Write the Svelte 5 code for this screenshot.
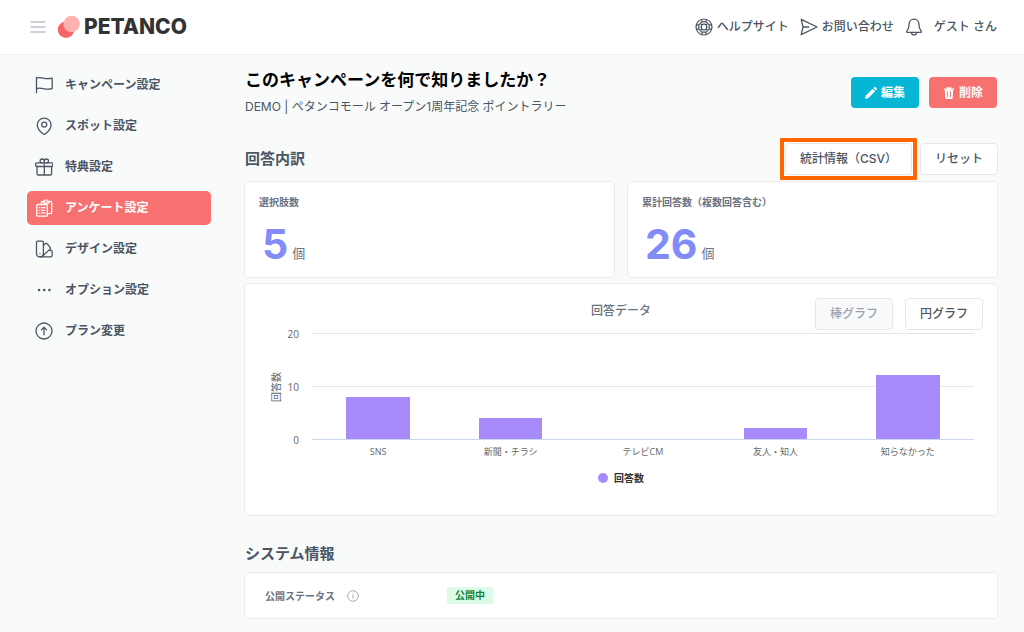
<script>
  const nav = [
    { label: 'キャンペーン設定', icon: 'flag' },
    { label: 'スポット設定', icon: 'pin' },
    { label: '特典設定', icon: 'gift' },
    { label: 'アンケート設定', icon: 'survey', active: true },
    { label: 'デザイン設定', icon: 'palette' },
    { label: 'オプション設定', icon: 'dots' },
    { label: 'プラン変更', icon: 'up' }
  ];

  const stats = [
    { label: '選択肢数', value: 5 },
    { label: '累計回答数（複数回答含む）', value: 26 }
  ];

  const max = 20;
  const ticks = [20, 10, 0];
  const answers = [
    { label: 'SNS', value: 8 },
    { label: '新聞・チラシ', value: 4 },
    { label: 'テレビCM', value: 0 },
    { label: '友人・知人', value: 2 },
    { label: '知らなかった', value: 12 }
  ];

  let chartType = $state('bar');
</script>

<header class="topbar">
  <button class="menu" type="button" aria-label="メニュー">
    <svg width="16" height="12" viewBox="0 0 16 12" fill="none" stroke="#9aa3b2" stroke-width="1.1">
      <path d="M.5 1h15M.5 6h15M.5 11h15" />
    </svg>
  </button>
  <a class="logo" href="#top">
    <svg width="24" height="24" viewBox="0 0 24 24" aria-hidden="true">
      <circle cx="9" cy="14.7" r="8.2" fill="#f56565" />
      <circle cx="14.6" cy="9" r="8.2" fill="#ffb0b0" />
    </svg>
    <span>PETANCO</span>
  </a>
  <nav class="links">
    <a href="#help">
      <svg width="18" height="18" viewBox="0 0 18 18" fill="none" stroke="currentColor" stroke-width="1.2">
        <circle cx="9" cy="9" r="8" />
        <circle cx="9" cy="9" r="2.9" />
        <path d="M6.900 1.300v2.500l4.200 0V1.300M6.900 16.700v-2.500h4.200v2.500M1.300 6.900h2.500v4.200H1.300M16.700 6.900h-2.500v4.200h2.500M3.800 6.900l3.100-3.100M11.100 3.800l3.100 3.100M14.200 11.100l-3.100 3.100M6.900 14.200l-3.100-3.100M5.300 5.300l1.700 1.700M12.700 5.300l-1.700 1.700M5.300 12.700l1.700-1.700M12.700 12.700l-1.700-1.700" />
      </svg>
      ヘルプサイト
    </a>
    <a href="#contact">
      <svg width="18" height="18" viewBox="0 0 18 18" fill="none" stroke="currentColor" stroke-width="1.3" stroke-linejoin="round">
        <path d="M1.2 1.400 17 9 1.200 16.600 3 9zM3 9h6.200" />
      </svg>
      お問い合わせ
    </a>
    <button class="bell" type="button" aria-label="お知らせ">
      <svg width="18" height="18" viewBox="0 0 18 18" fill="none" stroke="currentColor" stroke-width="1.3" stroke-linejoin="round">
        <path d="M9 1.200c-3 0-4.900 2.200-4.900 4.900 0 4.500-1 5.800-2.300 7.200-.3.400-.1 1 .5 1h13.400c.6 0 .8-.6.5-1-1.300-1.400-2.300-2.700-2.300-7.200C13.900 3.400 12 1.200 9 1.200z" />
        <path d="M6.500 14.400c0 1.500 1.100 2.500 2.500 2.500s2.500-1 2.500-2.500" />
      </svg>
    </button>
    <span class="user">ゲスト さん</span>
  </nav>
</header>

<div class="layout">
  <aside>
    <nav class="side">
      {#each nav as item}
        <a href="#{item.icon}" class:active={item.active} aria-current={item.active ? 'page' : undefined}>
          <svg width="18" height="18" viewBox="0 0 18 18" fill="none" stroke="currentColor" stroke-width="1.3" stroke-linecap="round" stroke-linejoin="round" aria-hidden="true">
            {#if item.icon === 'flag'}
              <path d="M1.500 1.300v15.400M1.500 2.200c5.200-2 8.200 2 15.700 0v10.400c-7.500 2-10.500-2-15.700 0" />
            {:else if item.icon === 'pin'}
              <path d="M9.200 1.200c-3.900 0-6.900 2.900-6.900 6.700 0 3.600 3.500 7.200 5.700 8.900.7.600 1.700.600 2.400 0 2.200-1.700 5.700-5.300 5.700-8.900 0-3.800-3-6.700-6.900-6.700z" />
              <circle cx="9.200" cy="7.600" r="2.500" />
            {:else if item.icon === 'gift'}
              <rect x=".7" y="4.800" width="17" height="3.700" rx=".9" />
              <path d="M2 8.500v7.200c0 .8.500 1.300 1.300 1.300h12c.8 0 1.300-.5 1.300-1.300V8.500M9.300 4.800V17M9.300 4.800V3.200C9.300 2 8.400 1 7.200 1S5.100 1.800 5.100 2.900s.9 1.900 2.100 1.900M9.300 3.200c0-1.200.9-2.200 2.100-2.200s2.100.8 2.100 1.900-.9 1.900-2.100 1.900" />
            {:else if item.icon === 'survey'}
              <rect x="1.800" y="5.500" width="10.500" height="11.700" rx=".9" />
              <path d="M6.300 5.500V3.300c0-.6.300-.9.900-.9h1M14 2.400h1.400c.8 0 1.300.5 1.300 1.300v9.700c0 .8-.5 1.300-1.300 1.300h-3.100" />
              <path d="M8.500 4V2.300h1.100c.2-1 .8-1.500 1.600-1.500s1.400.5 1.600 1.500h1.100V4z" />
              <path d="M6.300 8.700h3.600M6.300 11.300h3.600M6.300 13.900h3.600M4.200 8.700h.1M4.200 11.300h.1M4.200 13.900h.1" />
            {:else if item.icon === 'palette'}
              <path d="M2.500 1.100h4.800c.7 0 1.100.4 1.100 1.100v11.300c0 2-1.300 3.400-3.500 3.400s-3.400-1.400-3.400-3.400V2.200c0-.7.400-1.100 1-1.100z" />
              <path d="M8.400 5.100l2.400-1.600c.6-.4 1.100-.3 1.500.3l2.900 3.800c.4.600.3 1.100-.2 1.500l-7.500 7.100M13.700 10.300h2.300c.7 0 1.100.4 1.100 1.100v4.400c0 .7-.4 1.100-1.100 1.100H5M4.900 13.600h.1" />
            {:else if item.icon === 'dots'}
              <g fill="currentColor" stroke="none">
                <circle cx="4" cy="9" r="1.300" />
                <circle cx="9.200" cy="9" r="1.300" />
                <circle cx="14.400" cy="9" r="1.300" />
              </g>
            {:else}
              <circle cx="9" cy="9" r="8" />
              <path d="M9 12.700V5.500M6.400 7.900 9 5.300l2.600 2.600" />
            {/if}
          </svg>
          {item.label}
        </a>
      {/each}
    </nav>
  </aside>

  <main>
    <div class="heading">
      <div>
        <h1>このキャンペーンを何で知りましたか？</h1>
        <p>DEMO | ペタンコモール オープン1周年記念 ポイントラリー</p>
      </div>
      <div class="actions">
        <button class="solid edit" type="button">
          <svg width="12" height="12" viewBox="0 0 12 12" fill="currentColor" aria-hidden="true">
            <path d="M0 12l.9-3.400L7.700 1.800l2.500 2.500-6.800 6.800zM8.500 1l.7-.7c.4-.4.900-.4 1.300 0l1.200 1.200c.4.400.4.900 0 1.300l-.7.700z" />
          </svg>
          編集
        </button>
        <button class="solid delete" type="button">
          <svg width="12" height="12" viewBox="0 0 12 12" aria-hidden="true">
            <path d="M1 2.200h10M4.200 2V.8h3.600V2" fill="none" stroke="currentColor" stroke-width="1.300" />
            <path d="M1.800 3h8.400l-.5 8c-.1.700-.4 1-1.100 1H3.400c-.7 0-1-.3-1.100-1z" fill="currentColor" />
            <path d="M4.400 4.300l.2 6M7.600 4.300l-.2 6" stroke="#f87171" stroke-width=".9" />
          </svg>
          削除
        </button>
      </div>
    </div>

    <section>
      <div class="toolbar">
        <h2>回答内訳</h2>
        <div class="actions">
          <button class="outline marked" type="button">統計情報（CSV）</button>
          <button class="outline" type="button">リセット</button>
        </div>
      </div>

      <div class="stats">
        {#each stats as stat}
          <div class="card stat">
            <h3>{stat.label}</h3>
            <p><strong>{stat.value}</strong><span>個</span></p>
          </div>
        {/each}
      </div>

      <div class="card chart-card">
        <div class="chart-head">
          <h3>回答データ</h3>
          <div class="switch">
            <button class="outline" type="button" disabled={chartType === 'bar'} onclick={() => (chartType = 'bar')}>棒グラフ</button>
            <button class="outline" type="button" disabled={chartType === 'pie'} onclick={() => (chartType = 'pie')}>円グラフ</button>
          </div>
        </div>
        <div class="chart">
          <div class="axis-title"><span>回答数</span></div>
          <div class="ticks">
            {#each ticks as tick}<span>{tick}</span>{/each}
          </div>
          <div class="plot">
            <div class="grid"><i></i><i></i></div>
            <div class="bars">
              {#each answers as answer}
                <div><b style="height: {(answer.value / max) * 100}%"></b></div>
              {/each}
            </div>
          </div>
          <div class="categories">
            {#each answers as answer}<span>{answer.label}</span>{/each}
          </div>
        </div>
        <div class="legend"><i></i>回答数</div>
      </div>
    </section>

    <section class="system">
      <h2>システム情報</h2>
      <div class="card row">
        <div class="row-label">
          公開ステータス
          <svg width="12" height="12" viewBox="0 0 12 12" fill="none" stroke="#9ca3af" aria-hidden="true">
            <circle cx="6" cy="6" r="5.300" stroke-width=".9" />
            <path d="M6 5.300v3.200M6 3.400v1" />
          </svg>
        </div>
        <span class="badge">公開中</span>
      </div>
    </section>
  </main>
</div>

<style>
  :global(body) {
    margin: 0;
    background: #f9fbfb;
    color: #4b5563;
    font: 12px/20px Inter, 'Noto Sans CJK JP', sans-serif;
  }
  * {
    box-sizing: border-box;
  }
  h1, h2, h3, p {
    margin: 0;
  }
  svg {
    flex: none;
    display: block;
  }
  button {
    font: inherit;
    color: inherit;
    cursor: pointer;
  }
  a {
    color: inherit;
    text-decoration: none;
  }

  .topbar {
    display: flex;
    align-items: center;
    height: 55px;
    padding: 0 27px 0 30px;
    background: #fff;
    border-bottom: 1px solid #f1f4f5;
  }
  .menu, .bell {
    padding: 0;
    border: 0;
    background: none;
  }
  .logo {
    display: flex;
    align-items: center;
    gap: 3px;
    margin-left: 11px;
    color: #333;
    font-size: 21px;
    font-weight: 800;
  }
  .links {
    display: flex;
    align-items: center;
    gap: 11px;
    margin-left: auto;
    font-weight: 500;
  }
  .links a {
    display: flex;
    align-items: center;
    gap: 4px;
  }

  .layout {
    display: grid;
    grid-template-columns: 184px minmax(0, 1fr);
    gap: 33px;
    padding: 13px 26px 13px 27px;
  }
  .side {
    display: flex;
    flex-direction: column;
    gap: 7px;
  }
  .side a {
    display: flex;
    align-items: center;
    gap: 12px;
    height: 34px;
    padding: 0 8px;
    border-radius: 5px;
    font-weight: 600;
  }
  .side .active {
    background: #f87171;
    color: #fff;
  }

  .heading, .toolbar {
    display: flex;
    align-items: center;
    justify-content: space-between;
  }
  .heading {
    padding: 0 1px;
  }
  h1 {
    color: #000;
    font-size: 17px;
    line-height: 24px;
    font-weight: 700;
  }
  .heading p {
    margin-top: 5px;
  }
  h2 {
    padding-left: 1px;
    font-size: 15px;
    line-height: 24px;
    font-weight: 600;
  }
  .actions {
    display: flex;
    gap: 10px;
  }
  .solid {
    display: flex;
    align-items: center;
    gap: 4px;
    height: 31px;
    padding: 0 14px;
    border: 0;
    border-radius: 4px;
    color: #fff;
    font-weight: 600;
  }
  .edit {
    background: #06b6d4;
  }
  .delete {
    background: #f87171;
  }
  .toolbar {
    margin-top: 26px;
  }
  .toolbar .actions {
    gap: 8px;
  }
  .outline {
    height: 32px;
    padding: 0 14px;
    border: 1px solid #e5e7eb;
    border-radius: 4px;
    background: #fff;
    font-weight: 500;
  }
  .outline:disabled {
    background: #f9fafb;
    color: #9ca3af;
    cursor: default;
  }
  .marked {
    position: relative;
  }
  .marked::after {
    content: '';
    position: absolute;
    inset: -6px;
    border: 4px solid #ff6600;
    border-radius: 1px;
  }

  .card {
    border: 1px solid #e8ecec;
    border-radius: 5px;
    background: #fff;
  }
  .stats {
    display: grid;
    grid-template-columns: 1fr 1fr;
    gap: 12px;
    margin-top: 6px;
  }
  .stat {
    padding: 10px 14px;
    color: #6b7280;
  }
  .stat h3 {
    font-size: 10px;
    line-height: 20px;
    font-weight: 600;
  }
  .stat p {
    display: flex;
    align-items: flex-end;
    gap: 4px;
    margin-top: 9px;
    padding-left: 3px;
    font-size: 13px;
    line-height: 28px;
  }
  .stat strong {
    color: #818cf8;
    font-size: 41px;
    line-height: 46px;
    font-weight: 700;
  }

  .chart-card {
    margin-top: 5px;
    padding: 14px 14px 31px;
  }
  .chart-head {
    display: grid;
    grid-template-columns: 1fr auto 1fr;
  }
  .chart-head h3 {
    grid-column: 2;
    color: #6b7280;
    font-size: 12px;
    line-height: 26px;
    font-weight: 500;
  }
  .switch {
    display: flex;
    justify-content: flex-end;
    gap: 12px;
  }
  .chart {
    display: grid;
    grid-template-columns: 12px 17px minmax(0, 1fr);
    grid-template-rows: 107px auto;
    margin-top: 3px;
    padding: 0 9px 0 11px;
    color: #666;
    font-family: 'Open Sans', 'Noto Sans CJK JP', sans-serif;
    font-size: 10px;
    line-height: 12px;
  }
  .axis-title {
    display: grid;
    place-items: center;
  }
  .axis-title span {
    writing-mode: vertical-rl;
    text-orientation: sideways;
    transform: rotate(180deg);
  }
  .ticks {
    display: flex;
    flex-direction: column;
    justify-content: space-between;
    margin: -5px 0 -6px;
    text-align: right;
  }
  .plot {
    display: grid;
    margin-left: 13px;
  }
  .grid, .bars {
    grid-area: 1 / 1;
  }
  .grid {
    display: grid;
    grid-template-rows: 1fr 1fr;
    border-bottom: 1px solid #ccd6eb;
  }
  .grid i {
    border-top: 1px solid #e6e6e6;
  }
  .bars {
    display: grid;
    grid-template-columns: repeat(5, 1fr);
    padding-bottom: 1px;
  }
  .bars div {
    display: flex;
    align-items: flex-end;
    justify-content: center;
  }
  .bars b {
    width: 48%;
    background: #a78bfa;
  }
  .categories {
    grid-column: 3;
    display: grid;
    grid-template-columns: repeat(5, 1fr);
    margin: 6px 0 0 13px;
    font-size: 9px;
    text-align: center;
  }
  .legend {
    display: flex;
    align-items: center;
    justify-content: center;
    gap: 6px;
    margin-top: 14px;
    color: #333;
    font-size: 10px;
    line-height: 12px;
    font-weight: 700;
  }
  .legend i {
    width: 10px;
    height: 10px;
    border-radius: 50%;
    background: #a78bfa;
  }

  .system {
    margin-top: 26px;
  }
  .row {
    display: flex;
    align-items: center;
    height: 47px;
    margin-top: 6px;
    padding: 0 20px;
    font-size: 10px;
    font-weight: 600;
  }
  .row-label {
    display: flex;
    align-items: center;
    gap: 12px;
    width: 182px;
    color: #6b7280;
  }
  .badge {
    padding: 0 8px;
    border-radius: 2px;
    background: #dcfce7;
    color: #15803d;
    line-height: 17px;
  }
</style>
